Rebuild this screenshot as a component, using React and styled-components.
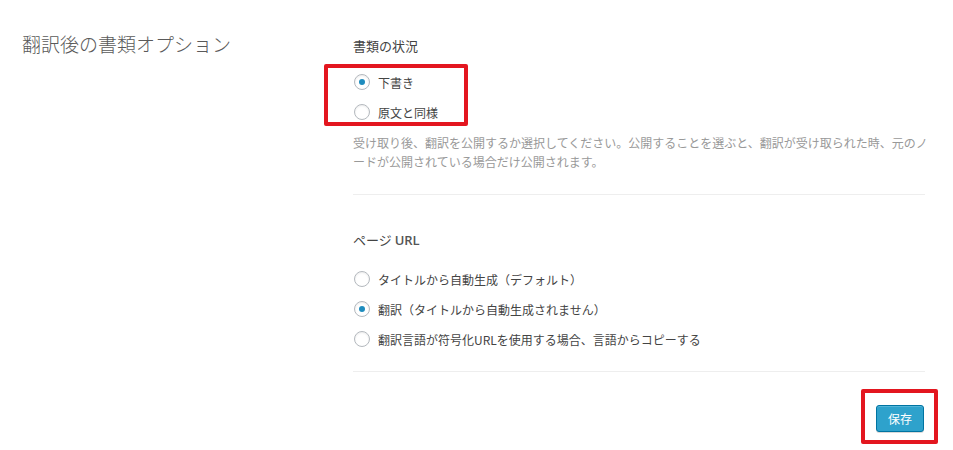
import React, { useState } from 'react';
import styled, { createGlobalStyle } from 'styled-components';

const GlobalStyle = createGlobalStyle`
  html, body {
    margin: 0;
    background: #fff;
  }
  body {
    font-family: 'Open Sans', 'Noto Sans CJK JP', sans-serif;
    color: #444;
  }
`;

const statusOptions = [
  { id: 'draft', label: '下書き' },
  { id: 'same', label: '原文と同様' },
];

const urlOptions = [
  { id: 'auto', label: 'タイトルから自動生成（デフォルト）' },
  { id: 'translate', label: '翻訳（タイトルから自動生成されません）' },
  { id: 'copy', label: '翻訳言語が符号化URLを使用する場合、言語からコピーする' },
];

const App = () => {
  const [status, setStatus] = useState('draft');
  const [url, setUrl] = useState('translate');

  return (
    <Page>
      <GlobalStyle />
      <Heading>翻訳後の書類オプション</Heading>
      <Fields>
        <FieldLabel>書類の状況</FieldLabel>
        <RadioList $top={11}>
          <Highlight $left={-29} $top={-3} $width={144} $height={62} />
          {statusOptions.map((item) => (
            <RadioRow key={item.id}>
              <Radio
                type='radio'
                name='status'
                checked={status === item.id}
                onChange={() => setStatus(item.id)}
              />
              {item.label}
            </RadioRow>
          ))}
        </RadioList>
        <Description>
          受け取り後、翻訳を公開するか選択してください。公開することを選ぶと、翻訳が受け取られた時、元のノードが公開されている場合だけ公開されます。
        </Description>
        <Divider $top={23} />

        <FieldLabel $top={35}>
          ページ <span className='latin'>URL</span>
        </FieldLabel>
        <RadioList $top={14}>
          {urlOptions.map((item) => (
            <RadioRow key={item.id}>
              <Radio
                type='radio'
                name='url'
                checked={url === item.id}
                onChange={() => setUrl(item.id)}
              />
              {item.label}
            </RadioRow>
          ))}
        </RadioList>
        <Divider $top={17} />

        <Actions>
          <ButtonWrap>
            <Highlight $left={-15} $top={-16} $width={77} $height={55} />
            <SaveButton type='button'>保存</SaveButton>
          </ButtonWrap>
        </Actions>
      </Fields>
    </Page>
  );
};

const Page = styled.main`
  display: flex;
  padding-left: 22px;
  width: 953px;
  height: 450px;
  box-sizing: border-box;
  overflow: hidden;
`;

const Heading = styled.h2`
  width: 331px;
  flex-shrink: 0;
  margin: 0;
  padding-top: 30px;
  font-family: 'Noto Sans CJK JP', sans-serif;
  font-size: 19px;
  font-weight: 300;
  line-height: 28px;
  color: #5a5a5a;
`;

const Fields = styled.section`
  width: 580px;
  padding-top: 36px;
`;

const FieldLabel = styled.div`
  margin-top: ${({ $top }) => $top || 0}px;
  font-family: 'Noto Sans CJK JP', sans-serif;
  font-size: 13px;
  line-height: 20px;
  color: #444;
  .latin {
    font-family: 'Open Sans', sans-serif;
    font-weight: 600;
    font-size: 13px;
    color: #555;
  }
`;

const RadioList = styled.div`
  position: relative;
  margin-top: ${({ $top }) => $top}px;
  display: flex;
  flex-direction: column;
`;

const RadioRow = styled.label`
  display: flex;
  align-items: center;
  gap: 8px;
  height: 30px;
  padding-left: 1px;
  font-family: 'Noto Sans CJK JP', sans-serif;
  font-size: 12px;
  color: #444;
  cursor: pointer;
`;

const Radio = styled.input`
  appearance: none;
  margin: 0;
  width: 16px;
  height: 16px;
  border-radius: 50%;
  border: 1px solid #b4b9be;
  background: #fff;
  box-shadow: inset 0 1px 2px rgba(0, 0, 0, 0.08);
  display: grid;
  place-items: center;
  flex-shrink: 0;
  &:checked::before {
    content: '';
    width: 6px;
    height: 6px;
    border-radius: 50%;
    background: #1e8cbe;
  }
`;

const Description = styled.p`
  margin: 6px 0 0;
  font-family: 'Noto Sans CJK JP', sans-serif;
  font-size: 12px;
  line-height: 19px;
  color: #999;
`;

const Divider = styled.hr`
  margin: ${({ $top }) => $top}px 8px 0 0;
  border: 0;
  border-top: 1px solid #eee;
  height: 0;
`;

const Actions = styled.div`
  display: flex;
  justify-content: flex-end;
  padding-top: 33px;
  padding-right: 9px;
`;

const ButtonWrap = styled.div`
  position: relative;
`;

const SaveButton = styled.button`
  width: 48px;
  height: 27px;
  padding: 0;
  border: 1px solid #0074a2;
  border-radius: 3px;
  background: #2ea2cc;
  box-shadow: inset 0 1px 0 rgba(120, 200, 230, 0.5),
    0 1px 0 rgba(0, 0, 0, 0.15);
  font-family: 'Noto Sans CJK JP', sans-serif;
  font-size: 12px;
  color: #fff;
  cursor: pointer;
`;

const Highlight = styled.span`
  position: absolute;
  left: ${({ $left }) => $left}px;
  top: ${({ $top }) => $top}px;
  width: ${({ $width }) => $width}px;
  height: ${({ $height }) => $height}px;
  box-sizing: border-box;
  border: 4px solid #e3161f;
  border-radius: 2px;
  pointer-events: none;
`;

export default App;
